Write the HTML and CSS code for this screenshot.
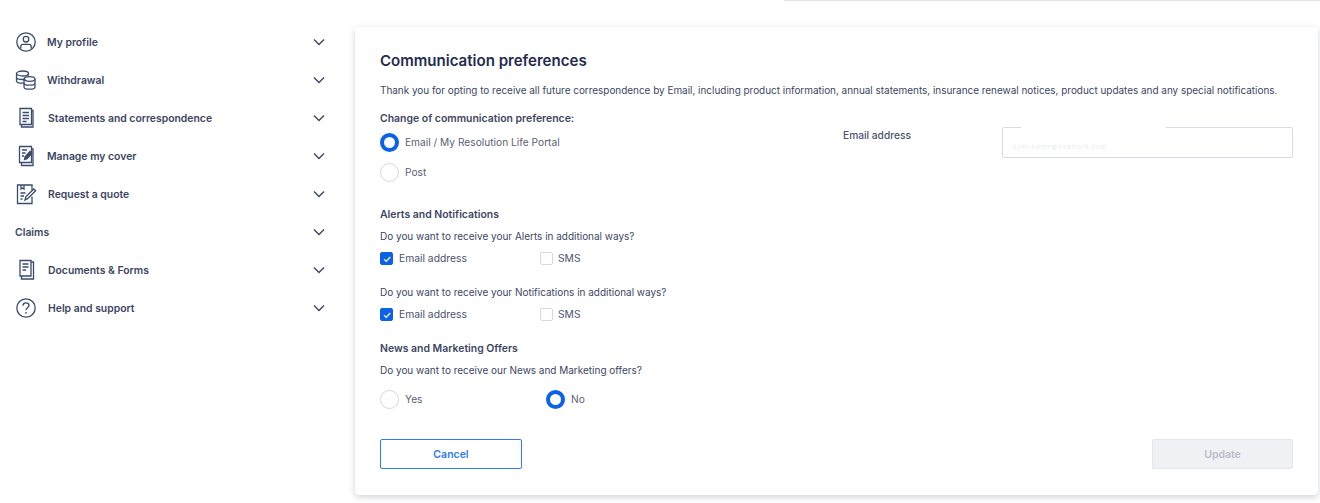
FILE: index.html
```html
<!DOCTYPE html>
<html lang="en">
<head>
<meta charset="utf-8">
<title>Communication preferences</title>
<link rel="stylesheet" href="styles.css">
</head>
<body>
<div class="topline"></div>
<div class="page">
  <nav class="side">
    <a class="item"><span class="ico"><svg viewBox="0 0 22 22" width="22" height="22"><circle cx="11" cy="11" r="9.2"/><circle cx="11" cy="8.2" r="2.8"/><path d="M5.8 17.6v-2.2c0-1.3 1-2.1 2.2-2.1h6c1.2 0 2.2.8 2.2 2.1v2.2"/></svg></span><span class="lbl">My profile</span><svg class="chev" viewBox="0 0 12 8" width="12" height="8"><path d="M1 1.5l5 5 5-5"/></svg></a>
    <a class="item"><span class="ico"><svg viewBox="0 0 22 22" width="22" height="22"><ellipse cx="7.5" cy="4.5" rx="6" ry="2.5"/><path d="M1.5 4.5v7.5c0 1.2 2.2 2.2 6 2.2h2M1.500 8.200c0 1.300 2.500 2.300 6 2.300h3M13.500 6.800c-.4-.2 0-1 0-2.300"/><ellipse cx="14.500" cy="10" rx="5.500" ry="2.300"/><path d="M9 10v8c0 1.300 2.400 2.200 5.500 2.200s5.500-.9 5.500-2.200v-8M9 14c0 1.300 2.400 2.200 5.500 2.200S20 15.300 20 14"/></svg></span><span class="lbl">Withdrawal</span><svg class="chev" viewBox="0 0 12 8" width="12" height="8"><path d="M1 1.5l5 5 5-5"/></svg></a>
    <a class="item"><span class="ico"><svg viewBox="0 0 22 22" width="22" height="22"><path d="M5 1.500h11.500v16H5z"/><path d="M16.500 3.500h1.500v16.500H6.500v-2.500"/><path d="M7.500 5.500h6.500M7.500 8.500h6.500M7.500 11.500h6.500M7.500 14.500h4"/></svg></span><span class="lbl lbl-s">Statements and correspondence</span><svg class="chev" viewBox="0 0 12 8" width="12" height="8"><path d="M1 1.500l5 5 5-5"/></svg></a>
    <a class="item"><span class="ico"><svg viewBox="0 0 22 22" width="22" height="22"><path d="M4.500 1.500h12v16h-12z"/><path d="M16.500 4h1.500v16.500H6.500v-3"/><path d="M7 5h5M7 8h3.500M7 11h2"/><path class="fill" d="M9.500 14.500l.6-2.800 4.800-5.200 2 1.900-4.800 5.200z"/></svg></span><span class="lbl">Manage my cover</span><svg class="chev" viewBox="0 0 12 8" width="12" height="8"><path d="M1 1.500l5 5 5-5"/></svg></a>
    <a class="item"><span class="ico"><svg viewBox="0 0 22 22" width="22" height="22"><path d="M17 7.500V2H2.500v18.500H17v-7"/><path d="M6 2v4l1.500-1L9 6V2"/><path d="M5.500 10h5M5.500 13h3.500M5.500 16h2"/><path d="M10 17l.8-3.200 8-7.800 1.800 1.800-8 7.800z"/></svg></span><span class="lbl lbl-s">Request a quote</span><svg class="chev" viewBox="0 0 12 8" width="12" height="8"><path d="M1 1.500l5 5 5-5"/></svg></a>
    <a class="item"><span class="lbl">Claims</span><svg class="chev" viewBox="0 0 12 8" width="12" height="8"><path d="M1 1.500l5 5 5-5"/></svg></a>
    <a class="item"><span class="ico"><svg viewBox="0 0 22 22" width="22" height="22"><path d="M5 1.500h11v15.500H5z"/><path d="M16 3h2.500v17H6.500v-3"/><path d="M7.500 5h6M7.500 8h6M7.500 11h3.500"/></svg></span><span class="lbl lbl-s">Documents &amp; Forms</span><svg class="chev" viewBox="0 0 12 8" width="12" height="8"><path d="M1 1.500l5 5 5-5"/></svg></a>
    <a class="item"><span class="ico"><svg viewBox="0 0 22 22" width="22" height="22"><circle cx="11" cy="11" r="9.200"/><path d="M8 8.700c0-1.700 1.300-2.800 3-2.800s3 1.100 3 2.600c0 2.300-3 2.300-3 4.700"/><path class="dot" d="M11 15.300v1.300"/></svg></span><span class="lbl lbl-s">Help and support</span><svg class="chev" viewBox="0 0 12 8" width="12" height="8"><path d="M1 1.500l5 5 5-5"/></svg></a>
  </nav>

  <main class="card">
    <h1 class="title">Communication preferences</h1>
    <p class="intro">Thank you for opting to receive all future correspondence by Email, including product information, annual statements, insurance renewal notices, product updates and any special notifications.</p>

    <div class="pref">
      <div class="pref-left">
        <div class="heading">Change of communication preference:</div>
        <label class="radio-row first"><span class="radio on"></span><span class="radio-text">Email / My Resolution Life Portal</span></label>
        <label class="radio-row"><span class="radio"></span><span class="radio-text">Post</span></label>
      </div>
      <div class="pref-right">
        <div class="email-label">Email address</div>
        <div class="email-box"><span class="masked">user.name@example.com</span></div>
      </div>
    </div>

    <div class="heading h-alerts">Alerts and Notifications</div>
    <div class="question">Do you want to receive your Alerts in additional ways?</div>
    <div class="checks">
      <label class="check"><span class="box on"><svg viewBox="0 0 12 12" width="12" height="12"><path d="M3 6.200l2.200 2.200L9.200 4"/></svg></span>Email address</label>
      <label class="check"><span class="box"></span>SMS</label>
    </div>
    <div class="question q-gap">Do you want to receive your Notifications in additional ways?</div>
    <div class="checks">
      <label class="check"><span class="box on"><svg viewBox="0 0 12 12" width="12" height="12"><path d="M3 6.200l2.200 2.200L9.200 4"/></svg></span>Email address</label>
      <label class="check"><span class="box"></span>SMS</label>
    </div>

    <div class="heading h-news">News and Marketing Offers</div>
    <div class="question">Do you want to receive our News and Marketing offers?</div>
    <div class="yn">
      <label class="radio-row yn-col"><span class="radio"></span><span class="radio-text">Yes</span></label>
      <label class="radio-row"><span class="radio on"></span><span class="radio-text">No</span></label>
    </div>

    <div class="actions">
      <button class="btn cancel" type="button">Cancel</button>
      <button class="btn update" type="button" disabled>Update</button>
    </div>
  </main>
</div>
</body>
</html>
```
FILE: styles.css
```css
* { box-sizing: border-box; }
html, body { margin: 0; padding: 0; }
body {
  background: #fff;
  font-family: Inter, "Liberation Sans", Arial, sans-serif;
  height: 503px;
  overflow: hidden;
  color: #3c4663;
  position: relative;
}
.topline {
  position: absolute;
  top: 0;
  right: 0;
  width: 536px;
  height: 1px;
  background: #dfe5f0;
}
.page { display: flex; align-items: flex-start; padding-top: 23px; }
.side { width: 355px; flex: none; padding-left: 15px; }
.item { display: flex; align-items: center; height: 38px; width: 310px; color: #3c4663; font-size: 10.400px; font-weight: 600; }
.ico { width: 22px; height: 22px; margin-right: 10px; flex: none; display: block; }
.ico svg { display: block; fill: none; stroke: #3a4a70; stroke-width: 1.300; }
.ico svg .fill { fill: #3a4a70; }
.ico svg .dot { stroke-width: 1.800; }
.lbl { flex: 1; }
.lbl-s { margin-left: 1px; }
.chev { fill: none; stroke: #3c4663; stroke-width: 1.400; flex: none; }

.card {
  width: 963px;
  height: 468px;
  margin-top: 4px;
  flex: none;
  background: #fff;
  border-radius: 4px;
  padding: 24px 25px 25px;
  box-shadow: 0 2px 6px rgba(40, 50, 80, .22);
  font-size: 10.200px;
  line-height: 16px;
}
.title { margin: 0; font-size: 15.050px; line-height: 20px; font-weight: 600; color: #232c4f; }
.intro { margin: 11px 0 0; color: #3c4663; white-space: nowrap; font-size: 9.930px; }
.pref { display: flex; margin-top: 12px; }
.pref-left { width: 463px; flex: none; }
.pref-right { display: flex; flex: 1; padding-top: 17px; }
.heading { font-weight: 600; color: #3c4663; font-size: 10.450px; height: 16px; padding-top: 1px; }
.radio-row { display: flex; align-items: center; height: 30px; }
.radio-row.first { margin-top: 1px; }
.radio { width: 19px; height: 19px; border-radius: 50%; border: 1px solid #d3d8e2; background: #fff; margin-right: 6px; flex: none; }
.radio.on { border: 4.500px solid #0b62e6; }
.radio-text { color: #5a6072; font-size: 10.200px; }
.email-label { width: 159px; flex: none; color: #4b5370; font-weight: 500; }
.email-box {
  position: relative;
  width: 291px;
  height: 31px;
  border: 1px solid #d8dce5;
  border-radius: 2px;
  background: #fff;
  padding: 9px 0 0 10px;
}
.email-box::before { content: ""; position: absolute; left: 18px; top: -1px; width: 145px; height: 2px; background: #fff; }
.masked { font-size: 6px; color: #e6e8ec; filter: blur(.6px); letter-spacing: 1px; }
.h-alerts { margin-top: 19px; }
.question { margin-top: 6px; color: #3c4663; font-size: 9.980px; }
.q-gap { margin-top: 16px; }
.checks { display: flex; height: 20px; margin-top: 4px; }
.check { display: flex; align-items: center; width: 160px; color: #4b5370; font-size: 10.300px; }
.box { width: 13px; height: 13px; border: 1px solid #d3d8e2; border-radius: 2px; margin-right: 6px; flex: none; display: block; }
.box.on { background: #0b62e6; border-color: #0b62e6; }
.box svg { display: block; fill: none; stroke: #fff; stroke-width: 1.200; }
.check:last-child .box { margin-right: 5px; }
.h-news { margin-top: 16px; }
.yn { display: flex; margin-top: 6px; }
.yn-col { width: 166px; }
.actions { display: flex; justify-content: space-between; margin-top: 25px; }
.btn { height: 30px; border-radius: 2px; font-family: inherit; font-size: 10.500px; font-weight: 600; padding: 0; }
.cancel { width: 142px; background: #fff; border: 1px solid #2f7bec; color: #2f7bec; }
.update { width: 141px; background: #f0f1f4; border: 1px solid #e3e6ec; color: #b9bec8; }
```
